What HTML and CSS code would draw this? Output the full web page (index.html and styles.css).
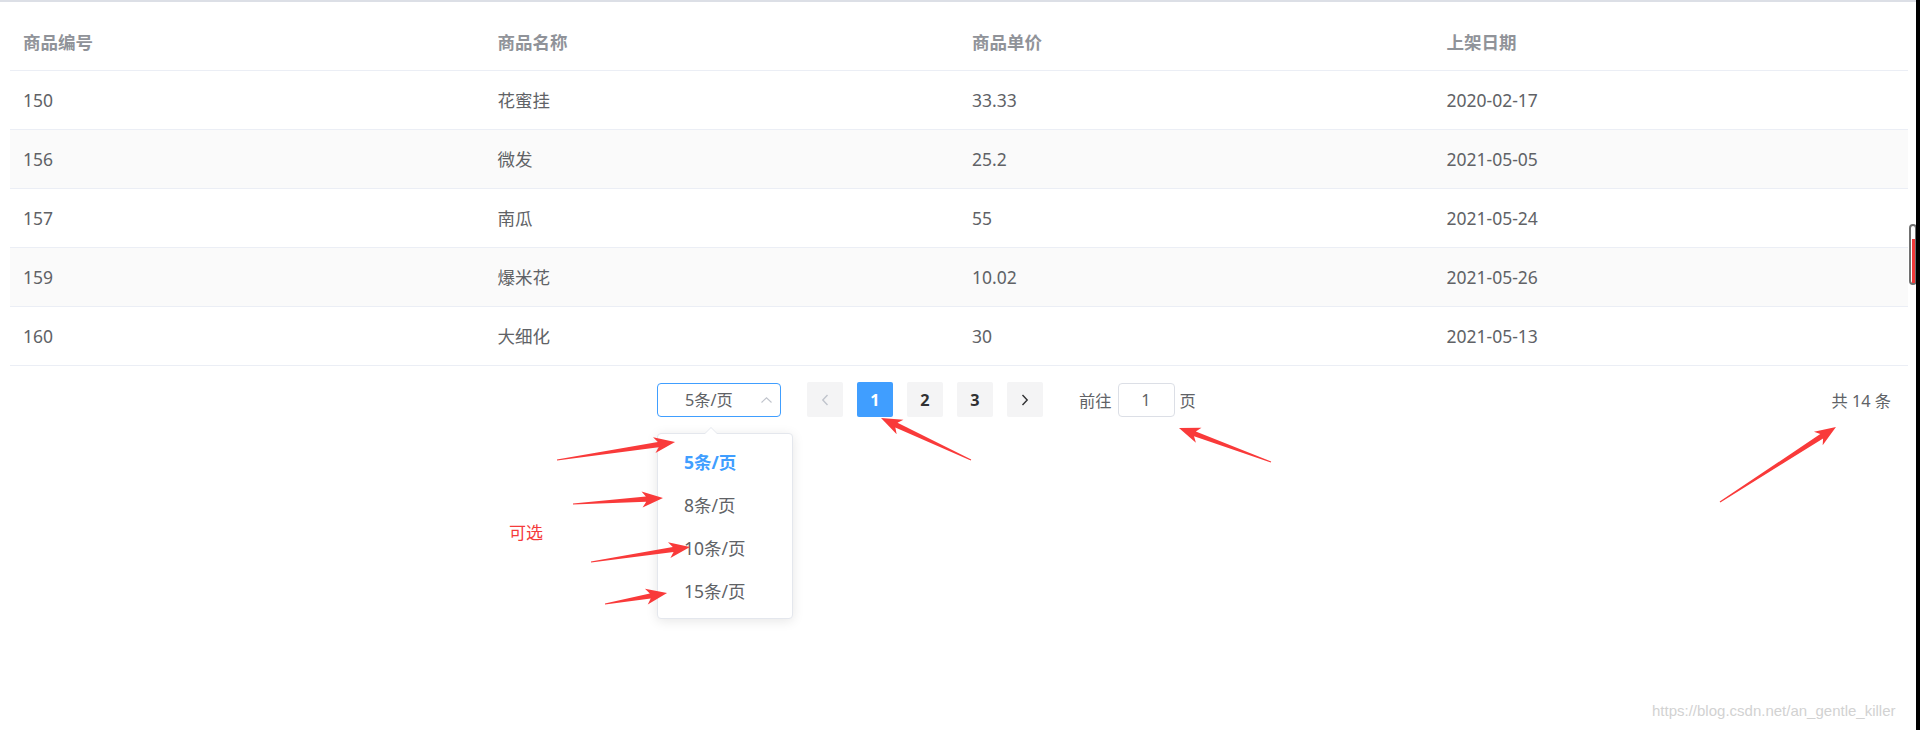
FILE: index.html
```html
<!DOCTYPE html>
<html lang="zh-CN">
<head>
<meta charset="utf-8">
<title>商品列表</title>
<link rel="stylesheet" href="styles.css">
</head>
<body>
<div class="topline"></div>
<main class="content">
  <table class="grid">
    <thead>
      <tr><th>商品编号</th><th>商品名称</th><th>商品单价</th><th>上架日期</th></tr>
    </thead>
    <tbody>
      <tr><td>150</td><td>花蜜挂</td><td>33.33</td><td>2020-02-17</td></tr>
      <tr><td>156</td><td>微发</td><td>25.2</td><td>2021-05-05</td></tr>
      <tr><td>157</td><td>南瓜</td><td>55</td><td>2021-05-24</td></tr>
      <tr><td>159</td><td>爆米花</td><td>10.02</td><td>2021-05-26</td></tr>
      <tr><td>160</td><td>大细化</td><td>30</td><td>2021-05-13</td></tr>
    </tbody>
  </table>

  <div class="pager">
    <div class="sizes">
      <div class="select">
        <span class="sel-text">5条/页</span>
        <svg class="sel-arrow" width="11" height="6" viewBox="0 0 11 6"><path d="M0.5 5.5 L5.5 0.8 L10.5 5.5" fill="none" stroke="#c0c4cc" stroke-width="1.1"/></svg>
      </div>
      <div class="dropdown">
        <ul class="options">
          <li class="option active">5条/页</li>
          <li class="option">8条/页</li>
          <li class="option">10条/页</li>
          <li class="option">15条/页</li>
        </ul>
      </div>
    </div>
    <div class="pages">
      <span class="btn prev"><svg width="8" height="12" viewBox="0 0 8 12"><path d="M6.5 1 L1.8 6 L6.5 11" fill="none" stroke="#c0c4cc" stroke-width="1.4"/></svg></span>
      <span class="btn num active">1</span>
      <span class="btn num">2</span>
      <span class="btn num">3</span>
      <span class="btn next"><svg width="8" height="12" viewBox="0 0 8 12"><path d="M1.5 1 L6.2 6 L1.5 11" fill="none" stroke="#303133" stroke-width="1.4"/></svg></span>
    </div>
    <div class="jump">前往<span class="jump-input">1</span>页</div>
    <div class="total">共 14 条</div>
  </div>
</main>

<div class="note">可选</div>

<svg class="annot" width="1920" height="730" viewBox="0 0 1920 730">
  <g fill="#f93a3a">
    <polygon transform="translate(557 460) rotate(-8.67)" points="0,-0.6 102.4,-2.6 98.4,-8 119.4,0 98.4,8 102.4,2.6 0,0.6"/>
    <polygon transform="translate(573 504) rotate(-3.81)" points="0,-0.6 73.2,-2.6 69.2,-8 90.2,0 69.2,8 73.2,2.6 0,0.6"/>
    <polygon transform="translate(591 562) rotate(-8.62)" points="0,-0.6 83.1,-2.6 79.1,-8 100.1,0 79.1,8 83.1,2.6 0,0.6"/>
    <polygon transform="translate(605 604) rotate(-10.06)" points="0,-0.6 46,-2.6 42,-8 63,0 42,8 46,2.6 0,0.6"/>
    <polygon transform="translate(971 460) rotate(-154.98)" points="0,-0.6 82.3,-2.6 78.3,-8 99.3,0 78.3,8 82.3,2.6 0,0.6"/>
    <polygon transform="translate(1271 462) rotate(-159.72)" points="0,-0.6 81.1,-2.6 77.1,-8 98.1,0 77.1,8 81.1,2.6 0,0.6"/>
    <polygon transform="translate(1720 502) rotate(-32.89)" points="0,-0.6 121.1,-2.6 117.1,-8 138.1,0 117.1,8 121.1,2.6 0,0.6"/>
  </g>
</svg>

<div class="scroll"><div class="thumb"></div></div>
<div class="edge"></div>
<div class="watermark">https://blog.csdn.net/an_gentle_killer</div>
</body>
</html>
```

FILE: styles.css
```css
* { box-sizing: border-box; }

html, body {
  margin: 0;
  padding: 0;
}

body {
  position: relative;
  width: 1920px;
  height: 730px;
  overflow: hidden;
  background: #fff;
  font-family: "Noto Sans", "Noto Sans CJK SC", sans-serif;
  color: #606266;
}

.topline {
  height: 2px;
  background: #dcdfe6;
}

.content {
  padding: 0 12px 0 10px;
}

.grid {
  width: 1898px;
  table-layout: fixed;
  border-collapse: collapse;
  font-size: 17.5px;
}

.grid th {
  text-align: left;
  font-weight: bold;
  color: #909399;
  padding: 28px 13px 16px;
  line-height: 24px;
  border-bottom: 1px solid #ebeef5;
}

.grid td {
  padding: 17px 13px;
  line-height: 24px;
  border-bottom: 1px solid #ebeef5;
  color: #606266;
}

.grid tbody tr:nth-child(even) td {
  background: #fafafa;
}

.pager {
  display: flex;
  align-items: center;
  height: 35px;
  margin-top: 16px;
  padding-left: 647px;
  padding-right: 17px;
  font-size: 16.25px;
  color: #606266;
}

.sizes {
  position: relative;
}

.select {
  width: 124px;
  height: 34px;
  border: 1px solid #409eff;
  border-radius: 4px;
  display: flex;
  align-items: center;
  padding-left: 27px;
  padding-right: 8px;
}

.sel-text {
  line-height: 20px;
}

.sel-arrow {
  margin-left: auto;
  display: block;
}

.dropdown {
  position: absolute;
  top: 50px;
  left: 0;
  width: 136px;
  background: #fff;
  border: 1px solid #e4e7ed;
  border-radius: 4px;
  box-shadow: 0 2px 12px 0 rgba(0, 0, 0, 0.1);
  z-index: 5;
}

.dropdown::before,
.dropdown::after {
  content: "";
  position: absolute;
  left: 46px;
  width: 0;
  height: 0;
  border-left: 7px solid transparent;
  border-right: 7px solid transparent;
}

.dropdown::before {
  top: -7px;
  border-bottom: 7px solid #e4e7ed;
}

.dropdown::after {
  top: -6px;
  border-bottom: 7px solid #fff;
}

.options {
  list-style: none;
  margin: 0;
  padding: 7px 0 5px;
}

.option {
  height: 43px;
  line-height: 43px;
  padding: 0 26px;
  font-size: 17.5px;
  color: #606266;
  white-space: nowrap;
}

.option.active {
  color: #409eff;
  font-weight: bold;
}

.pages {
  display: flex;
  gap: 14px;
  margin-left: 26px;
}

.btn {
  width: 36px;
  height: 35px;
  border-radius: 2px;
  background: #f4f4f5;
  display: flex;
  align-items: center;
  justify-content: center;
  font-weight: bold;
  color: #303133;
}

.btn svg {
  display: block;
}

.btn.active {
  background: #409eff;
  color: #fff;
}

.jump {
  margin-left: 36px;
  display: flex;
  align-items: center;
}

.jump-input {
  width: 57px;
  height: 34px;
  margin: 0 5px 0 6px;
  border: 1px solid #dcdfe6;
  border-radius: 4px;
  display: flex;
  align-items: center;
  justify-content: center;
}

.total {
  margin-left: auto;
  white-space: pre;
}

.note {
  position: absolute;
  left: 509px;
  top: 523px;
  font-size: 17px;
  line-height: 20px;
  color: #f53b3b;
}

.annot {
  position: absolute;
  left: 0;
  top: 0;
  z-index: 10;
  pointer-events: none;
}

.scroll {
  position: absolute;
  left: 1909px;
  top: 224px;
  width: 8px;
  height: 61px;
  border: 2px solid #707070;
  border-radius: 4px;
  background: #fff;
  z-index: 11;
}

.thumb {
  position: absolute;
  left: 1px;
  right: 0;
  top: 13px;
  bottom: 0;
  background: #f33a3a;
}

.edge {
  position: absolute;
  right: 0;
  top: 0;
  width: 4px;
  height: 730px;
  background: #000;
  z-index: 12;
}

.watermark {
  position: absolute;
  left: 1652px;
  top: 701px;
  font-family: "Liberation Sans", Arial, sans-serif;
  font-size: 15px;
  line-height: 20px;
  color: #d2d2d2;
  z-index: 12;
}
```
